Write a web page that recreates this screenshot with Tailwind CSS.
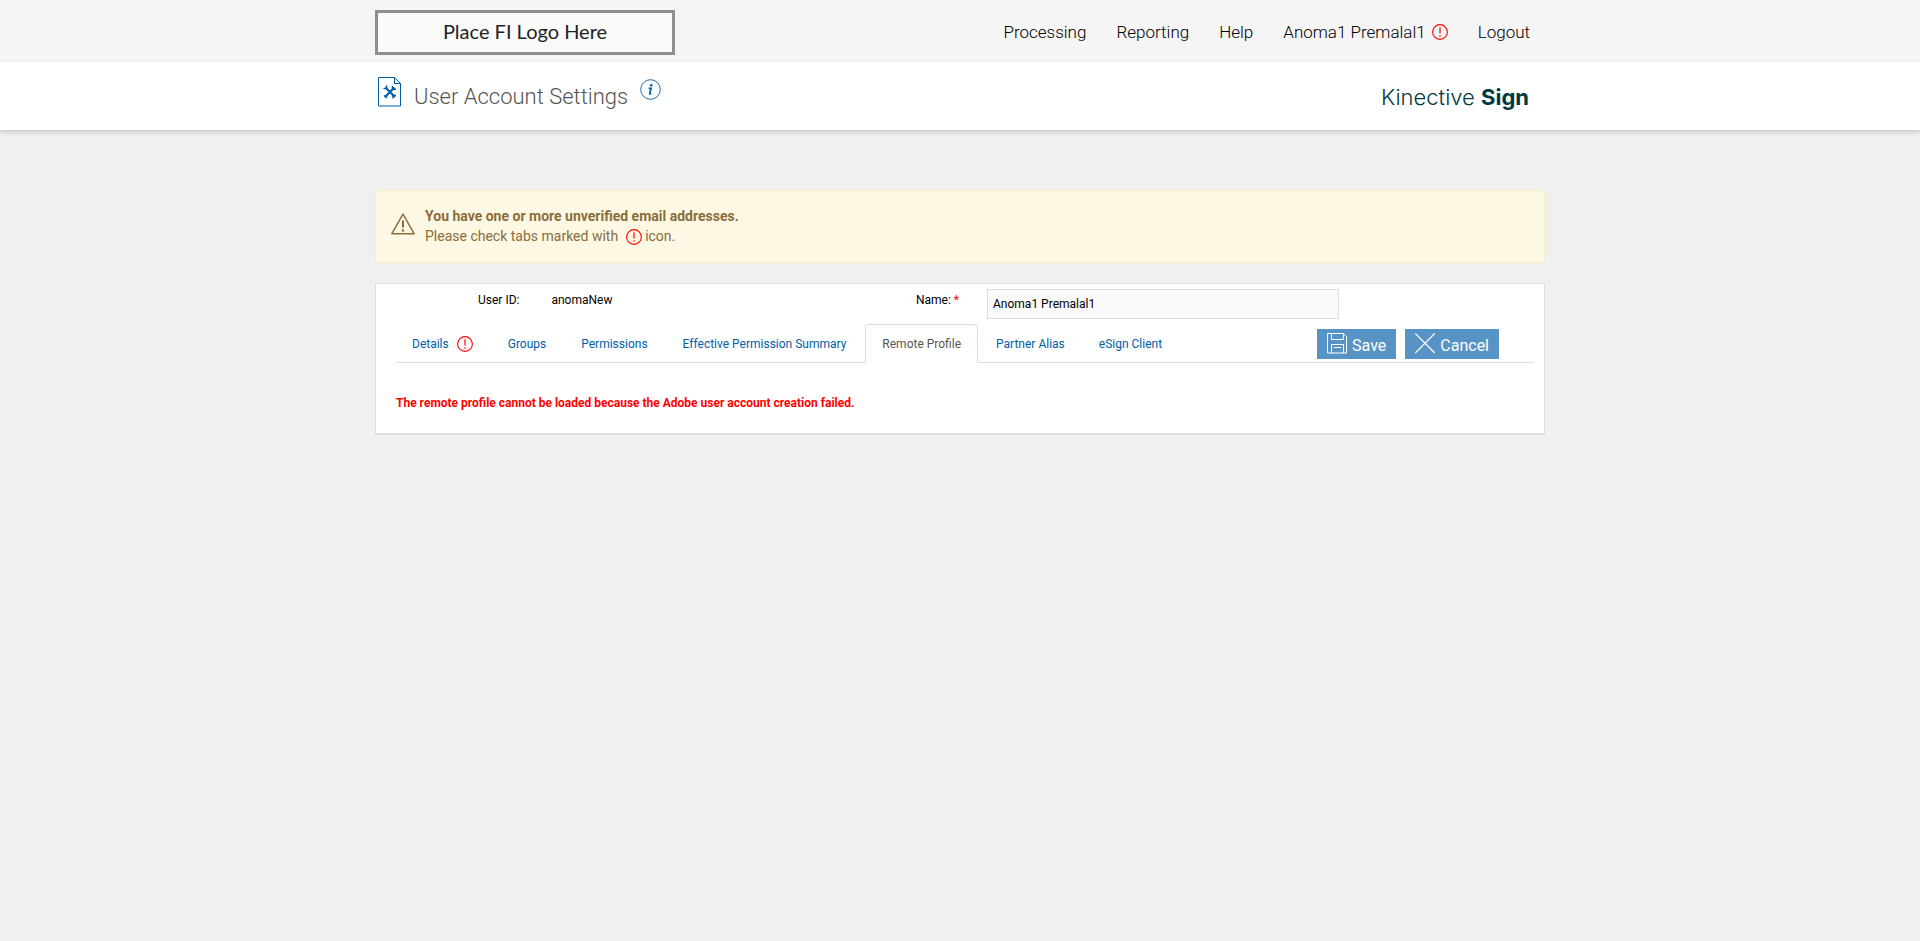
<!DOCTYPE html>
<html lang="en">
<head>
<meta charset="utf-8">
<title>User Account Settings</title>
<script src="https://cdn.jsdelivr.net/npm/@tailwindcss/browser@4"></script>
</head>
<body class="min-h-screen bg-[#f0f0f0] font-[Roboto,sans-serif] text-xs text-black">
<svg class="hidden">
  <symbol id="alert" viewBox="0 0 16 16"><circle cx="8" cy="8" r="7.4" fill="none" stroke="currentColor" stroke-width="1.1"/><path d="M8 3.2v6.4" stroke="currentColor" stroke-width="1.2"/><circle cx="8" cy="12" r=".8" fill="currentColor"/></symbol>
</svg>
<header>
  <div class="bg-[#f5f5f5]">
    <div class="mx-auto flex h-[62px] max-w-[1170px] items-start justify-between">
      <div class="mt-2.5 flex h-[45px] w-[300px] items-center justify-center border-3 border-[#8f8f8f] bg-[#fafafa] pb-0.5 font-[Lato,sans-serif] text-[20px] text-[#222]">Place FI Logo Here</div>
      <nav class="flex items-center gap-[30px] pt-[21px] pr-[15px] text-[17px] font-light">
        <a href="#">Processing</a>
        <a href="#">Reporting</a>
        <a href="#">Help</a>
        <a href="#" class="flex items-center gap-1.5">Anoma1 Premalal1 <svg class="size-4 text-[#f00]"><use href="#alert"/></svg></a>
        <a href="#">Logout</a>
      </nav>
    </div>
  </div>
  <div class="bg-white shadow-[0_2px_5px_rgba(0,0,0,0.18)]">
    <div class="mx-auto flex h-[68px] max-w-[1170px] items-center justify-between">
      <div class="flex items-start pb-0.5 pl-[3px]">
        <svg class="h-[30px] w-6" viewBox="0 0 24 30" fill="none" stroke="#005ea8">
          <path d="M.5 .5h16l6 6v22.500h-22z"/><path d="M16.500 .5v6h6"/>
          <path d="M7.500 10.500l9.500 9.500M16.500 10.500l-9.500 9.500" stroke-width="2.200"/>
          <path d="M5.500 11.500h3v-3M14.500 9v3.200h3.500M6 18.500l3 2.500M15 21.500v-3h3" stroke-width="1.500"/>
        </svg>
        <h1 class="ml-3 mt-1 text-[22px] leading-8 font-light text-[#555]">User Account Settings</h1>
        <svg class="ml-3 mt-0.5 size-[21px]" viewBox="0 0 21 21">
          <circle cx="10.500" cy="10.500" r="9.800" fill="none" stroke="#005ea8" stroke-width=".9"/>
          <circle cx="11.200" cy="6.300" r="1.300" fill="#005ea8"/>
          <path d="M8.600 9.300h2.500l-1.400 5.200q-.2 1 1.500-.2" fill="none" stroke="#005ea8" stroke-width="1.700"/>
        </svg>
      </div>
      <div class="pt-[3px] pr-4 font-[Inter,sans-serif] text-[22px] font-light text-[#003a40]">Kinective <b class="font-bold">Sign</b></div>
    </div>
  </div>
</header>
<main class="mx-auto max-w-[1170px] pt-[60px]">
  <div role="alert" class="flex rounded-[4px] border border-[#faebcc] bg-[#fcf8e3] px-[15px] py-[15px] text-sm text-[#8a6d3b]">
    <svg class="mt-[7px] h-[22px] w-6" viewBox="0 0 24 22" fill="none" stroke="currentColor" stroke-width="1.500" stroke-linejoin="round"><path d="M12 1L23.200 20.800H.8z"/><path d="M12 7.500v7" stroke-width="2"/><circle cx="12" cy="17.500" r=".6"/></svg>
    <div class="ml-2.5">
      <p class="leading-5 font-bold">You have one or more unverified email addresses.</p>
      <p class="flex items-center leading-[21px]">Please check tabs marked with <svg class="mr-[3px] ml-2 size-4 text-[#f00]"><use href="#alert"/></svg> icon.</p>
    </div>
  </div>
  <section class="mt-5 border border-b-2 border-[#ddd] bg-white pr-2.5 pl-5">
    <div class="flex pt-[5px]">
      <div class="flex w-1/2 gap-8 pt-px pl-[82px] leading-5"><span>User ID:</span><span>anomaNew</span></div>
      <div class="flex grow">
        <label for="name" class="mr-7 ml-[-49px] pt-px leading-5">Name: <span class="text-[#f00]">*</span></label>
        <input id="name" value="Anoma1 Premalal1" class="h-[30px] w-[352px] border border-[#ddd] bg-[#fafafa] px-[5px]">
      </div>
    </div>
    <div class="mt-[5px] flex items-end justify-between border-b border-[#ddd] text-[#005ea8]">
      <nav class="mb-[-1px] flex gap-[3px]">
        <a href="#" class="flex h-[39px] items-center gap-2 px-4">Details <svg class="size-4 text-[#f00]"><use href="#alert"/></svg></a>
        <a href="#" class="flex h-[39px] items-center px-4">Groups</a>
        <a href="#" class="flex h-[39px] items-center px-4">Permissions</a>
        <a href="#" class="flex h-[39px] items-center px-4">Effective Permission Summary</a>
        <a href="#" class="flex h-[39px] items-center rounded-t-[4px] border border-b-0 border-[#ddd] bg-white px-4 text-[#555]">Remote Profile</a>
        <a href="#" class="flex h-[39px] items-center px-[15px]">Partner Alias</a>
        <a href="#" class="flex h-[39px] items-center px-4">eSign Client</a>
      </nav>
      <div class="mr-[35px] mb-[3px] flex gap-[9px] text-base text-white">
        <button class="flex h-[30px] items-start bg-[#5893c6] px-2.5">
          <svg class="mt-1 mr-[5px] h-[21px] w-5" viewBox="0 0 20 21" fill="none" stroke="#fff"><path d="M.5 .5h16l3 3v16.500H.5zM4.500 .5v6h12v-6M4.500 20v-8.500h12v8.500M6.500 14.500h8"/></svg>
          <span class="pt-[5px] leading-6">Save</span></button>
        <button class="flex h-[30px] items-start bg-[#5893c6] px-2.5">
          <svg class="mt-1 mr-[5px] h-[21px] w-5" viewBox="0 0 20 21" fill="none" stroke="#fff" stroke-width="1.200"><path d="M.3 .5l19.500 19.500M19.700 .5L.3 20"/></svg>
          <span class="pt-[5px] leading-6">Cancel</span></button>
      </div>
    </div>
    <p class="pt-[30px] pb-5 leading-5 font-bold text-[#f00]">The remote profile cannot be loaded because the Adobe user account creation failed.</p>
  </section>
</main>
</body>
</html>
